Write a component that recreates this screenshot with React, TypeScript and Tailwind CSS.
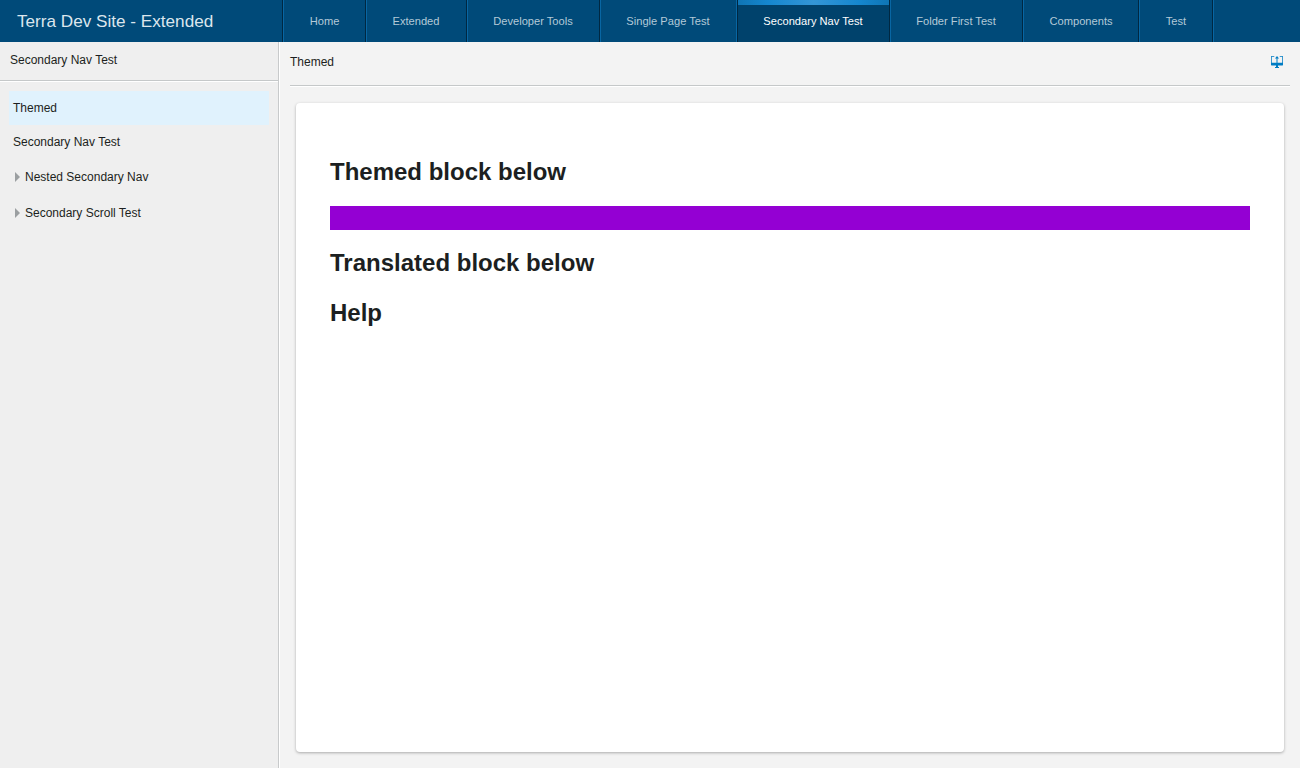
const tabs = [
  { label: 'Home', box: 'w-[83px]' },
  { label: 'Extended', box: 'w-[101px] pr-px' },
  { label: 'Developer Tools', box: 'w-[133px] pr-px' },
  { label: 'Single Page Test', box: 'w-[137px] pr-px', beforeActive: true },
  { label: 'Secondary Nav Test', box: 'w-[153px] pr-px', active: true },
  { label: 'Folder First Test', box: 'w-[133px] pr-px' },
  { label: 'Components', box: 'w-[116px]' },
  { label: 'Test', box: 'w-[74px]' },
];

function Header() {
  return (
    <header className="flex h-[42px] shrink-0 bg-[#004a79]">
      <div className="flex w-[283px] shrink-0 items-center border-r border-[#002842] pt-px pl-[17px] text-[17.15px] text-[#dce6ed]">
        Terra Dev Site - Extended
      </div>
      <nav className="flex border-r border-[#0866a3]">
        {tabs.map((t) => (
          <a
            key={t.label}
            className={
              'relative flex items-center justify-center border-x text-[11.14px] ' +
              t.box +
              (t.active
                ? ' border-[#002842] bg-[#00426c] text-white'
                : t.beforeActive
                  ? ' border-[#0866a3] text-[#b3c9d7]'
                  : ' border-l-[#0866a3] border-r-[#002842] text-[#b3c9d7]')
            }
          >
            {t.active && (
              <span className="absolute inset-x-0 top-0 h-[5px] bg-[radial-gradient(circle,#3496d6_0%,#1587cf_60%,#0f75b5_100%)]" />
            )}
            {t.label}
          </a>
        ))}
      </nav>
    </header>
  );
}

function Folder({ label }: { label: string }) {
  return (
    <li className="flex h-9 items-center pl-[6px]">
      <svg width="5" height="10" viewBox="0 0 5 10" className="mr-[5px]">
        <path d="M0 0L5 5L0 10Z" fill="#9b9fa1" />
      </svg>
      {label}
    </li>
  );
}

function Sidebar() {
  return (
    <aside className="w-[279px] shrink-0 border-r border-[#c8cacb] bg-[#efefef]">
      <div className="flex h-[39px] items-center border-b border-[#c5c8c9] pb-[3px] pl-[10px] shadow-[0_1px_0_#fff]">
        Secondary Nav Test
      </div>
      <ul className="px-[9px] pt-[10px]">
        <li className="flex h-[34px] items-center bg-[#e0f2fd] pl-1">Themed</li>
        <li className="flex h-[34px] items-center pl-1">Secondary Nav Test</li>
        <Folder label="Nested Secondary Nav" />
        <Folder label="Secondary Scroll Test" />
      </ul>
    </aside>
  );
}

function DisplayIcon() {
  return (
    <svg width="12" height="12" viewBox="0 0 48 48" fill="#007cc3">
      <path d="M13 0v3H3v24h19V10h-6l8-10 8 10h-6v17h19V3H35V0h11c1.100 0 2 .9 2 2v34c0 1.100-.9 2-2 2H28v6h4v4H16v-4h4v-6H2c-1.100 0-2-.9-2-2V2C0 .9.900 0 2 0h11z" />
    </svg>
  );
}

export default function App() {
  return (
    <div className="flex h-screen flex-col overflow-hidden bg-[#f3f3f3] font-['Liberation_Sans',Arial,sans-serif] text-xs text-[#1c1f21]">
      <Header />
      <div className="flex min-h-0 flex-1">
        <Sidebar />
        <main className="flex min-w-0 flex-1 flex-col border-l border-white pr-[10px] pl-[10px]">
          <div className="flex h-[44px] shrink-0 items-center justify-between border-b border-[#c5c8c9] pr-[7px] pb-[3px] shadow-[0_1px_0_#fff]">
            <span>Themed</span>
            <DisplayIcon />
          </div>
          <section className="mx-[6px] mt-[17px] mb-4 flex-1 rounded-[4px] bg-white px-[34px] pt-[51px] text-2xl leading-[36px] font-bold text-[#1c1f21] shadow-[0_1px_3px_rgba(0,0,0,0.3)]">
            <h2>Themed block below</h2>
            <div className="mt-4 mb-[15px] h-6 bg-[#9400d3]" />
            <h2>Translated block below</h2>
            <h2 className="mt-[14px]">Help</h2>
          </section>
        </main>
      </div>
    </div>
  );
}
